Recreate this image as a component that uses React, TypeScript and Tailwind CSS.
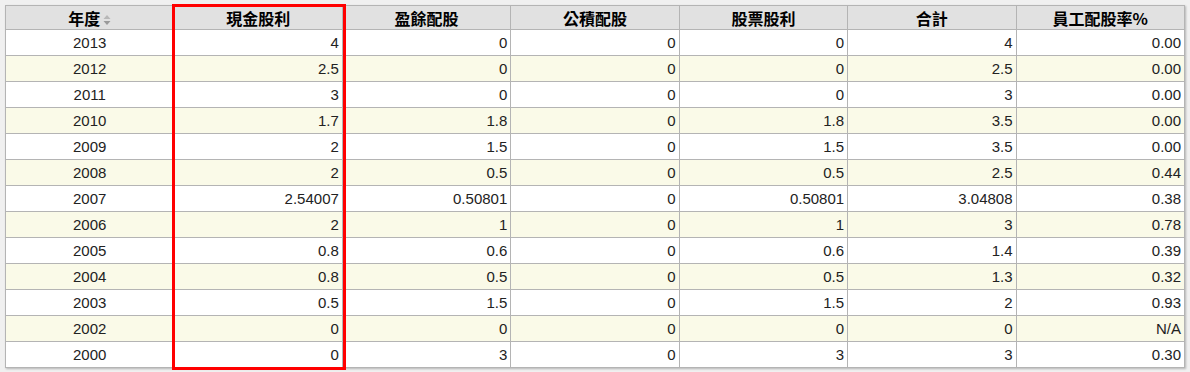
const headers = ["年度", "現金股利", "盈餘配股", "公積配股", "股票股利", "合計", "員工配股率%"];

const rows: string[][] = [
  ["2013", "4", "0", "0", "0", "4", "0.00"],
  ["2012", "2.5", "0", "0", "0", "2.5", "0.00"],
  ["2011", "3", "0", "0", "0", "3", "0.00"],
  ["2010", "1.7", "1.8", "0", "1.8", "3.5", "0.00"],
  ["2009", "2", "1.5", "0", "1.5", "3.5", "0.00"],
  ["2008", "2", "0.5", "0", "0.5", "2.5", "0.44"],
  ["2007", "2.54007", "0.50801", "0", "0.50801", "3.04808", "0.38"],
  ["2006", "2", "1", "0", "1", "3", "0.78"],
  ["2005", "0.8", "0.6", "0", "0.6", "1.4", "0.39"],
  ["2004", "0.8", "0.5", "0", "0.5", "1.3", "0.32"],
  ["2003", "0.5", "1.5", "0", "1.5", "2", "0.93"],
  ["2002", "0", "0", "0", "0", "0", "N/A"],
  ["2000", "0", "3", "0", "3", "3", "0.30"],
];

function SortIcon() {
  return (
    <svg width="8" height="12" viewBox="0 0 8 12" className="ml-[3px] inline-block align-middle">
      <path d="M4 1 L7.5 5 L0.5 5 Z" fill="#b8b8b8" />
      <path d="M4 11 L7.5 7 L0.5 7 Z" fill="#9a9a9a" />
    </svg>
  );
}

export default function App() {
  return (
    <div className="h-[372px] w-[1190px] bg-[#f0f0f0] p-[5px] font-['Liberation_Sans','Noto_Sans_CJK_TC',sans-serif]">
      <div className="relative w-[1180px]">
        <table className="w-[1180px] table-fixed border-collapse bg-white shadow-[1px_1px_2px_rgba(0,0,0,0.25)]">
          <thead>
            <tr className="h-[24px] bg-[#e1e1e1]">
              {headers.map((h, i) => (
                <th
                  key={h}
                  className="border border-[#b4b4b4] p-0 text-center align-middle font-['Noto_Sans_CJK_TC',sans-serif] text-[16px] leading-[22px] font-bold text-black"
                >
                  {h}
                  {i === 0 && <SortIcon />}
                </th>
              ))}
            </tr>
          </thead>
          <tbody>
            {rows.map((r, ri) => (
              <tr key={r[0]} className={`h-[26px] ${ri % 2 === 1 ? "bg-[#fafae8]" : "bg-white"}`}>
                {r.map((c, ci) => (
                  <td
                    key={ci}
                    className={`border border-[#b4b4b4] py-0 align-middle text-[15px] leading-[24px] text-[#222] ${
                      ci === 0 ? "text-center" : "pr-[3px] text-right"
                    }`}
                  >
                    {c}
                  </td>
                ))}
              </tr>
            ))}
          </tbody>
        </table>
        <div className="pointer-events-none absolute top-[-1px] left-[167px] h-[366px] w-[174px] border-[3px] border-[#ff0000]" />
      </div>
    </div>
  );
}
